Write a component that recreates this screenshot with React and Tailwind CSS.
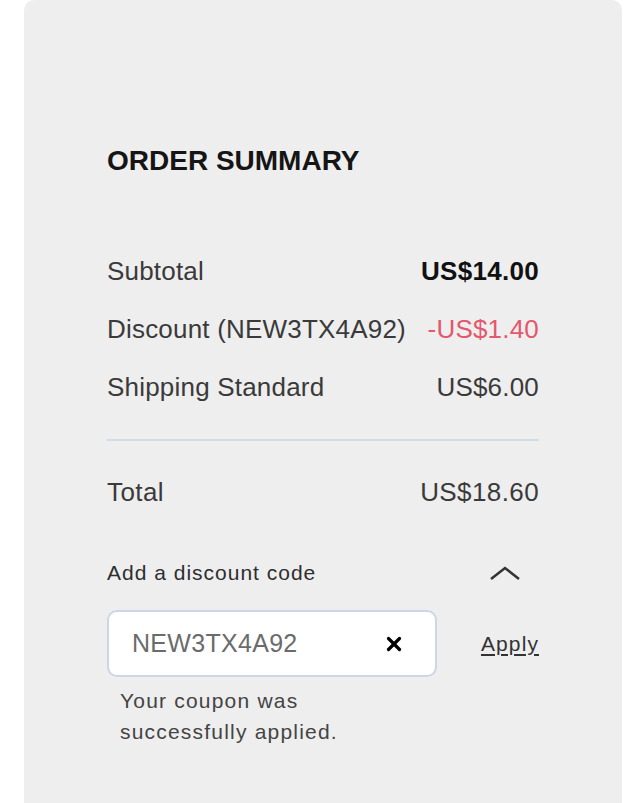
import { X } from 'lucide-react';

const rows = [
  { label: 'Subtotal', value: 'US$14.00', valueClass: 'font-bold tracking-[0.3px] text-[#111]' },
  { label: 'Discount (NEW3TX4A92)', value: '-US$1.40', valueClass: 'text-[#e4576c]' },
  { label: 'Shipping Standard', value: 'US$6.00', valueClass: 'text-[#3a3a3a]' },
];

const OrderSummary = () => {
  return (
    <div className="min-h-[803px] bg-white" style={{ fontFamily: '"Liberation Sans", Arial, sans-serif' }}>
      <div className="ml-[24px] min-h-[803px] w-[598px] rounded-t-[10px] bg-[#eeeeee] px-[83px] pt-[144px]">
        <h2 className="text-[28px] font-bold leading-[34px] text-[#151515]">ORDER SUMMARY</h2>

        <div className="mt-[64px]">
          {rows.map((row) => (
            <div key={row.label} className="flex h-[58px] items-center justify-between text-[26px] tracking-[0.2px] text-[#3a3a3a]">
              <span>{row.label}</span>
              <span className={row.valueClass}>{row.value}</span>
            </div>
          ))}
        </div>

        <div className="mt-[23px] h-[2px] bg-[#d3dbe5]" />

        <div className="mt-[22px] flex h-[58px] items-center justify-between text-[26px] tracking-[0.4px] text-[#3a3a3a]">
          <span>Total</span>
          <span>US$18.60</span>
        </div>

        <div className="mt-[33px] flex h-[38px] items-center justify-between">
          <span className="text-[21px] tracking-[1px] text-[#2e2e2e]">Add a discount code</span>
          <svg className="mr-[18px] h-[16px] w-[32px]" viewBox="0 0 32 16" fill="none" stroke="#333" strokeWidth="2.5">
            <path d="M2 14 L16 3 L30 14" />
          </svg>
        </div>

        <div className="mt-[18px] flex items-center justify-between">
          <div className="flex h-[67px] w-[330px] items-center justify-between rounded-[10px] border-2 border-[#cdd5e6] bg-white pl-[23px] pr-[30px]">
            <span className="text-[25px] tracking-[0.3px] text-[#6b6b6b]">NEW3TX4A92</span>
            <X className="h-[22px] w-[22px] text-black" strokeWidth={3.5} />
          </div>
          <button type="button" className="text-[21px] tracking-[1.1px] text-[#333] underline underline-offset-[3px]">
            Apply
          </button>
        </div>

        <p className="mt-[8px] pl-[13px] text-[21px] leading-[31px] tracking-[1.2px] text-[#444]">
          Your coupon was
          <br />
          successfully applied.
        </p>
      </div>
    </div>
  );
};

export default OrderSummary;
